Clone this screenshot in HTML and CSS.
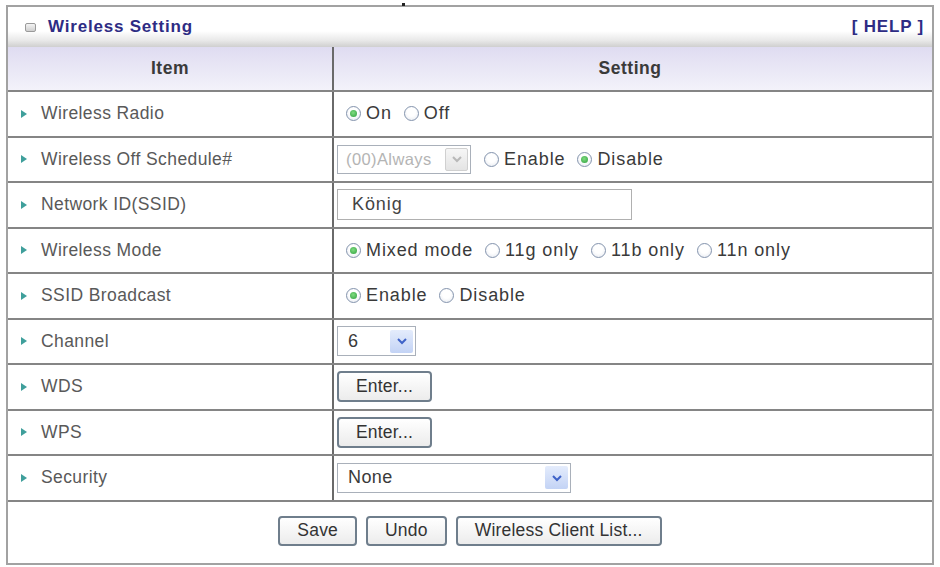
FILE: index.html
```html
<!DOCTYPE html>
<html>
<head>
<meta charset="utf-8">
<link rel="stylesheet" href="styles.css">
</head>
<body>
<span class="speck"></span>
<div class="panel">
  <div class="titlebar">
    <span class="ticon"></span>
    <span class="title">Wireless Setting</span>
    <span class="help">[ HELP ]</span>
  </div>
  <div class="row head">
    <div class="cell lab">Item</div>
    <div class="cell set">Setting</div>
  </div>
  <div class="row">
    <div class="cell lab"><i class="bul"></i>Wireless Radio</div>
    <div class="cell set">
      <span class="opt"><span class="radio on"></span>On</span>
      <span class="opt"><span class="radio"></span>Off</span>
    </div>
  </div>
  <div class="row">
    <div class="cell lab"><i class="bul"></i>Wireless Off Schedule#</div>
    <div class="cell set">
      <span class="select sched disabled"><span class="val">(00)Always</span><span class="arr"><svg width="12" height="8" viewBox="0 0 12 8"><polyline points="2,2 6,6 10,2" fill="none" stroke="#b8b8b8" stroke-width="2"/></svg></span></span>
      <span class="opt"><span class="radio"></span>Enable</span>
      <span class="opt"><span class="radio on"></span>Disable</span>
    </div>
  </div>
  <div class="row">
    <div class="cell lab"><i class="bul"></i>Network ID(SSID)</div>
    <div class="cell set">
      <span class="textbox">König</span>
    </div>
  </div>
  <div class="row">
    <div class="cell lab"><i class="bul"></i>Wireless Mode</div>
    <div class="cell set">
      <span class="opt"><span class="radio on"></span>Mixed mode</span>
      <span class="opt"><span class="radio"></span>11g only</span>
      <span class="opt"><span class="radio"></span>11b only</span>
      <span class="opt"><span class="radio"></span>11n only</span>
    </div>
  </div>
  <div class="row">
    <div class="cell lab"><i class="bul"></i>SSID Broadcast</div>
    <div class="cell set">
      <span class="opt"><span class="radio on"></span>Enable</span>
      <span class="opt"><span class="radio"></span>Disable</span>
    </div>
  </div>
  <div class="row">
    <div class="cell lab"><i class="bul"></i>Channel</div>
    <div class="cell set">
      <span class="select chan"><span class="val">6</span><span class="arr"><svg width="12" height="8" viewBox="0 0 12 8"><polyline points="2,2 6,6 10,2" fill="none" stroke="#3f63c8" stroke-width="2"/></svg></span></span>
    </div>
  </div>
  <div class="row">
    <div class="cell lab"><i class="bul"></i>WDS</div>
    <div class="cell set"><span class="btn">Enter...</span></div>
  </div>
  <div class="row">
    <div class="cell lab"><i class="bul"></i>WPS</div>
    <div class="cell set"><span class="btn">Enter...</span></div>
  </div>
  <div class="row">
    <div class="cell lab"><i class="bul"></i>Security</div>
    <div class="cell set">
      <span class="select sec"><span class="val">None</span><span class="arr"><svg width="12" height="8" viewBox="0 0 12 8"><polyline points="2,2 6,6 10,2" fill="none" stroke="#3f63c8" stroke-width="2"/></svg></span></span>
    </div>
  </div>
  <div class="actions">
    <span class="btn">Save</span>
    <span class="btn">Undo</span>
    <span class="btn">Wireless Client List...</span>
  </div>
</div>
</body>
</html>
```
FILE: styles.css
```css
html, body {
  margin: 0;
  padding: 0;
  background: #ffffff;
}
body {
  font-family: "Liberation Sans", Arial, sans-serif;
  position: relative;
  width: 940px;
  height: 567px;
  overflow: hidden;
}
.speck {
  position: absolute;
  left: 402px;
  top: 3px;
  width: 3px;
  height: 3px;
  background: #222;
}
.panel {
  margin: 5px 0 0 6px;
  width: 928px;
  border: 2px solid #a2a2a2;
  box-sizing: border-box;
}
.titlebar {
  height: 40px;
  display: flex;
  align-items: center;
  padding: 0 8px 0 17px;
  background: linear-gradient(#ffffff 0%, #ffffff 60%, #e8e8e8 84%, #cfcfcf 100%);
}
.ticon {
  width: 9px;
  height: 7px;
  border: 1px solid #9a9a9a;
  border-radius: 2px;
  background: linear-gradient(#f4f4f4, #cfcfcf);
  margin-right: 12px;
}
.title, .help {
  font-weight: bold;
  font-size: 17px;
  letter-spacing: 0.8px;
  color: #2e2c84;
}
.help {
  margin-left: auto;
}
.row {
  display: grid;
  grid-template-columns: 326px 1fr;
  height: 45.5px;
  border-bottom: 2px solid #858585;
  box-sizing: border-box;
}
.row.head {
  height: 45px;
  background: linear-gradient(#dfdcf1, #f3f2fa);
}
.cell {
  display: flex;
  align-items: center;
  font-size: 17.5px;
  letter-spacing: 0.4px;
}
.cell.lab {
  border-right: 2px solid #6a6a6a;
  padding-left: 13px;
  color: #595959;
}
.cell.set {
  padding-left: 3px;
  color: #3a3a3a;
  font-size: 18px;
  letter-spacing: 0.9px;
}
.head .cell {
  justify-content: center;
  font-weight: bold;
  font-size: 17.5px;
  letter-spacing: 0.5px;
  color: #3a3a3a;
  padding: 0;
}
.head .cell.set {
  padding-right: 6px;
}
.bul {
  width: 0;
  height: 0;
  border-left: 6px solid #3f9f9b;
  border-top: 4px solid transparent;
  border-bottom: 4px solid transparent;
  margin-right: 14px;
}
.opt {
  display: inline-flex;
  align-items: center;
  margin-left: 9px;
  margin-right: 12px;
}
.opt + .opt {
  margin-left: 0;
}
.radio {
  width: 15px;
  height: 15px;
  border-radius: 50%;
  border: 1.5px solid #8494ad;
  background: radial-gradient(circle at 50% 40%, #ffffff 40%, #e2e6ee 100%);
  box-sizing: border-box;
  margin-right: 5px;
  display: inline-flex;
  align-items: center;
  justify-content: center;
}
.radio.on::after {
  content: "";
  width: 7px;
  height: 7px;
  border-radius: 50%;
  background: radial-gradient(circle at 45% 40%, #7fdc7f, #2e9e3e);
}
.select {
  display: inline-flex;
  align-items: center;
  height: 29px;
  border: 1px solid #a9b0ba;
  box-sizing: border-box;
  padding: 2px;
  background: #fff;
  letter-spacing: 0.4px;
}
.select .val {
  flex: 1;
  padding-left: 8px;
  color: #3a3a3a;
}
.select .arr {
  width: 23px;
  height: 23px;
  display: inline-flex;
  align-items: center;
  justify-content: center;
  background: linear-gradient(#e4ecfc, #c3d3f5);
  border-radius: 2px;
}
.select.sched {
  width: 134px;
  margin-right: 4px;
}
.select.disabled .val {
  color: #b4b4b4;
  padding-left: 6px;
  font-size: 16.5px;
}
.select.disabled .arr {
  background: linear-gradient(#f6f6f6, #e4e4e4);
  border: 1px solid #d0d0d0;
  box-sizing: border-box;
}
.select.chan {
  width: 79px;
  height: 30px;
}
.select.sec {
  width: 234px;
  height: 30px;
}
.textbox {
  display: inline-flex;
  align-items: center;
  width: 295px;
  height: 31px;
  border: 1px solid #b0b0b0;
  box-sizing: border-box;
  padding-left: 14px;
  color: #444;
}
.btn {
  display: inline-flex;
  align-items: center;
  justify-content: center;
  height: 31px;
  padding: 0 17px;
  border: 2px solid #6f7e8c;
  border-radius: 4px;
  box-sizing: border-box;
  background: linear-gradient(#ffffff, #ececec);
  color: #333;
  font-size: 17.5px;
  letter-spacing: 0.2px;
}
.actions {
  height: 61.5px;
  display: flex;
  align-items: center;
  justify-content: center;
  gap: 9px;
  padding-bottom: 3px;
  box-sizing: border-box;
}
.actions .btn {
  height: 30px;
}
```
